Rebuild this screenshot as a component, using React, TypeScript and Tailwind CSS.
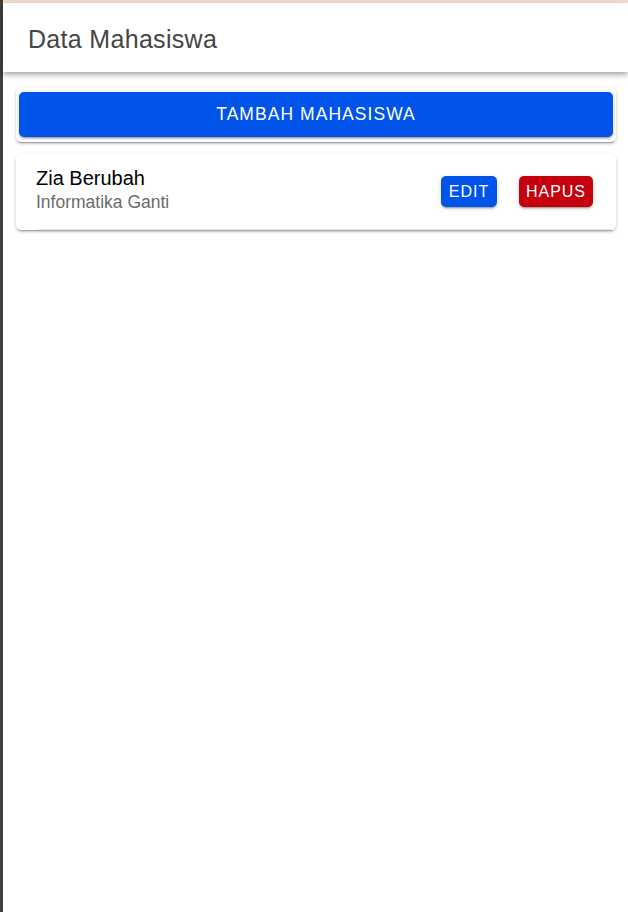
const cardShadow =
  'shadow-[0_3px_1px_-2px_rgba(0,0,0,0.2),0_2px_2px_0_rgba(0,0,0,0.14),0_1px_5px_0_rgba(0,0,0,0.12)]';

type Mahasiswa = {
  nama: string;
  jurusan: string;
};

const daftar: Mahasiswa[] = [{ nama: 'Zia Berubah', jurusan: 'Informatika Ganti' }];

function MahasiswaItem({ nama, jurusan }: Mahasiswa) {
  return (
    <div className={`rounded-[5px] bg-white ${cardShadow}`}>
      <div className="ml-[20px] flex h-[76px] items-center border-b border-[#ececec] pr-[23px]">
        <div className="flex-1 pb-[4px]">
          <div className="text-[20px] leading-[24px] text-black">{nama}</div>
          <div className="mt-[2px] text-[17.5px] leading-[21px] text-[#6b6b6b]">{jurusan}</div>
        </div>
        <div className="flex items-center gap-[22px]">
          <button
            className={`flex h-[31px] w-[56px] items-center justify-center rounded-[5px] bg-[#0054e9] text-[16px] tracking-[0.06em] text-white ${cardShadow}`}
          >
            EDIT
          </button>
          <button
            className={`flex h-[31px] w-[74px] items-center justify-center rounded-[5px] bg-[#c5000f] text-[16px] tracking-[0.06em] text-white ${cardShadow}`}
          >
            HAPUS
          </button>
        </div>
      </div>
    </div>
  );
}

export default function App() {
  return (
    <div className="flex min-h-[912px] bg-white font-['Liberation_Sans',Arial,sans-serif]">
      <div className="w-[3px] shrink-0 bg-[#404040]" />
      <div className="flex flex-1 flex-col">
        <div className="h-[3px] bg-[#f8dcd2]" />
        <header className="relative z-10 flex h-[69px] items-center bg-white px-[25px] pt-[4px] shadow-[0_2px_4px_-1px_rgba(0,0,0,0.2),0_4px_5px_0_rgba(0,0,0,0.14),0_1px_10px_0_rgba(0,0,0,0.12)]">
          <h1 className="text-[25px] tracking-[0.0125em] text-[#454545]">Data Mahasiswa</h1>
        </header>

        <main className="flex flex-col gap-[12px] pl-[13px] pr-[12px] pt-[16px]">
          <div className={`rounded-[5px] bg-white px-[3px] pb-[5px] pt-[4px] ${cardShadow}`}>
            <button
              className={`flex h-[45px] w-full items-center justify-center rounded-[5px] bg-[#0054e9] text-[17.5px] tracking-[0.06em] text-white ${cardShadow}`}
            >
              TAMBAH MAHASISWA
            </button>
          </div>

          {daftar.map((m) => (
            <MahasiswaItem key={m.nama} nama={m.nama} jurusan={m.jurusan} />
          ))}
        </main>
      </div>
    </div>
  );
}
